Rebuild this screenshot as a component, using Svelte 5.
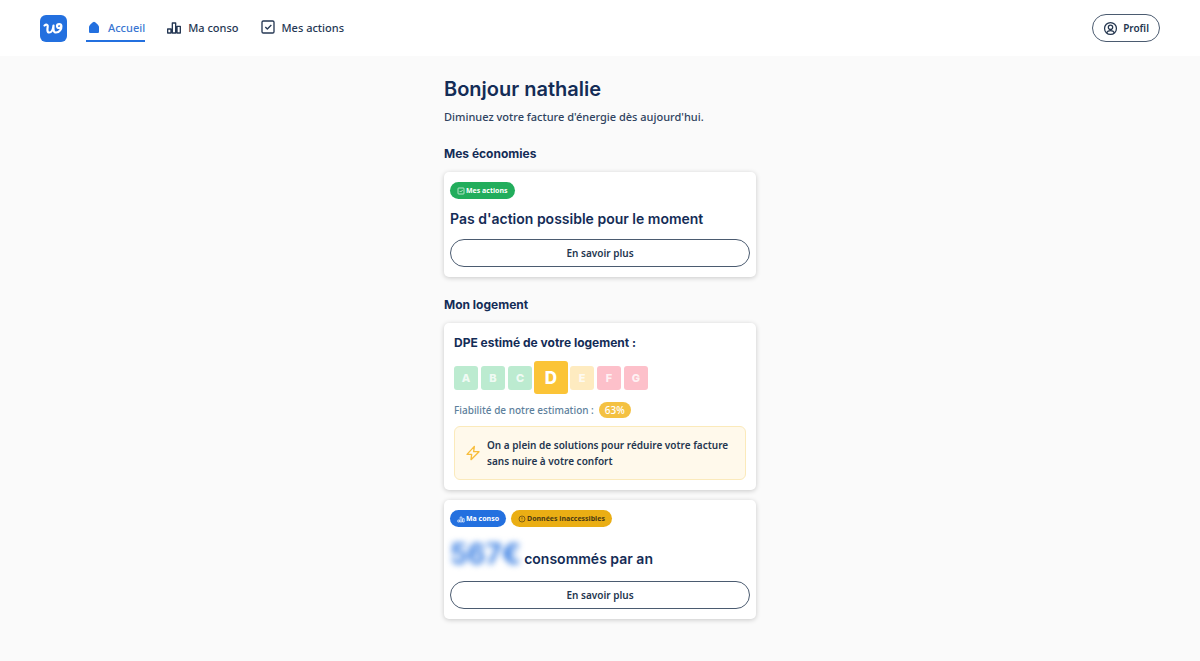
<script>
    const grades = [
        { letter: "A", tone: "green" },
        { letter: "B", tone: "green" },
        { letter: "C", tone: "green" },
        { letter: "D", tone: "yellow" },
        { letter: "E", tone: "yellow" },
        { letter: "F", tone: "red" },
        { letter: "G", tone: "red" },
    ];
    let name = "nathalie";
    let current = "D";
    let reliability = 63;
    let amount = 567;
</script>

{#snippet bars(size)}
    <svg viewBox="0 0 24 24" width={size} height={size} class="line" aria-hidden="true">
        <path d="M2.500 15h5v6h-5zM9.500 6h5v15h-5zM16.500 11h5v10h-5z" />
    </svg>
{/snippet}

{#snippet check(size)}
    <svg viewBox="0 0 24 24" width={size} height={size} class="line" aria-hidden="true">
        <rect x="3" y="3" width="18" height="18" rx="2" />
        <path d="M8 12l3 3 6-6" />
    </svg>
{/snippet}

<header>
    <a class="logo" href="#accueil" aria-label="Accueil">
        <svg viewBox="0 0 27 27" width="27" height="27" aria-hidden="true">
            <path d="M4.500 10.500c1.700-1.400 3.700-1 3.200 1.200-.4 2.500-.7 5.800 1.500 5.800 2.400 0 3.900-3 4.300-7-.3 4-.2 7 2.500 7 3.600 0 5.600-3.500 5.400-6.500-.2-2.600-4.400-2.600-4.400.1 0 2.600 3.800 2.500 4.400 0" />
        </svg>
    </a>
    <nav>
        <a class="active" href="#accueil">
            <svg viewBox="0 0 24 24" width="16" height="16" aria-hidden="true">
                <path fill="currentColor" d="M12 4c-1.500 0-7.500 5-7.500 8v7c0 1.200.8 2 2 2h11c1.200 0 2-.8 2-2v-7c0-3-6-8-7.500-8z" />
            </svg>
            Accueil
        </a>
        <a href="#conso">{@render bars(16)} Ma conso</a>
        <a href="#actions">{@render check(16)} Mes actions</a>
    </nav>
    <button class="profile">
        <svg viewBox="0 0 24 24" width="15" height="15" class="line" aria-hidden="true">
            <circle cx="12" cy="12" r="9.500" />
            <circle cx="12" cy="10" r="3.500" />
            <path d="M5.500 19c1.500-2.500 4-3.500 6.500-3.500s5 1 6.500 3.500" />
        </svg>
        Profil
    </button>
</header>

<main>
    <h1>Bonjour {name}</h1>
    <p class="intro">Diminuez votre facture d'énergie dès aujourd'hui.</p>

    <h2>Mes économies</h2>
    <section class="card">
        <div class="tags">
            <span class="tag green">{@render check(8)}Mes actions</span>
        </div>
        <h3>Pas d'action possible pour le moment</h3>
        <button class="more">En savoir plus</button>
    </section>

    <h2>Mon logement</h2>
    <section class="card dpe">
        <h4>DPE estimé de votre logement :</h4>
        <div class="grades">
            {#each grades as grade (grade.letter)}
                <span class="grade {grade.tone}" class:current={grade.letter === current}>
                    {grade.letter}
                </span>
            {/each}
        </div>
        <p class="reliability">
            Fiabilité de notre estimation :
            <span>{reliability}%</span>
        </p>
        <div class="notice">
            <svg viewBox="0 0 24 24" width="16" height="16" class="line" aria-hidden="true">
                <path d="M14 2L3 14h7l-1 8 12-12h-8z" />
            </svg>
            <p>On a plein de solutions pour réduire votre facture sans nuire à votre confort</p>
        </div>
    </section>

    <section class="card">
        <div class="tags">
            <span class="tag blue">{@render bars(8)}Ma conso</span>
            <span class="tag amber">
                <svg viewBox="0 0 24 24" width="8" height="8" class="line" aria-hidden="true">
                    <circle cx="12" cy="12" r="9" />
                    <path d="M12 7v6M12 16v1" />
                </svg>Données inaccessibles
            </span>
        </div>
        <h3 class="usage"><span class="amount">{amount}€</span> consommés par an</h3>
        <button class="more">En savoir plus</button>
    </section>
</main>

<style>
    :global(body) {
        background: #fafafa;
        color: #24364f;
        font-family: "Noto Sans", sans-serif;
        font-size: 11px;
    }

    header {
        display: flex;
        align-items: center;
        height: 56px;
        padding: 0 40px;
        background: white;
    }

    .logo {
        width: 27px;
        height: 27px;
        border-radius: 6px;
        background: #2370df;
    }
    .logo path {
        fill: none;
        stroke: white;
        stroke-width: 2.2;
        stroke-linecap: round;
        stroke-linejoin: round;
    }

    nav {
        display: flex;
        gap: 21px;
        margin-left: 19px;
    }
    nav a {
        display: flex;
        align-items: center;
        gap: 6px;
        height: 26px;
        border-bottom: 2px solid transparent;
        color: #263854;
        font-weight: 500;
        text-decoration: none;
    }
    nav a.active {
        color: #3a76d2;
        border-color: #2370df;
    }
    nav a.active svg {
        color: #2370df;
    }

    .line {
        flex: none;
        fill: none;
        stroke: currentColor;
        stroke-width: 2;
        stroke-linejoin: round;
    }

    button {
        border: 1px solid #4b5b70;
        border-radius: 14px;
        background: white;
        color: #24364f;
        font-family: inherit;
        font-size: 10px;
        font-weight: 600;
        cursor: pointer;
    }
    .profile {
        display: flex;
        align-items: center;
        gap: 5px;
        height: 28px;
        margin-left: auto;
        padding: 0 10px;
    }

    main {
        max-width: 312px;
        margin: 0 auto;
        padding: 20px 16px 40px;
    }

    h1,
    h2,
    h3,
    h4 {
        margin: 0;
        color: #142c56;
        font-family: Inter, sans-serif;
        font-weight: 700;
    }
    h1 {
        font-size: 20px;
        font-weight: 600;
        line-height: 26px;
    }
    h2 {
        margin: 18px 0 8px;
        font-size: 12px;
        line-height: 20px;
    }
    h3 {
        margin: 10px 0;
        font-size: 14px;
        font-weight: 600;
        line-height: 20px;
    }
    h4 {
        font-size: 12px;
        line-height: 20px;
    }
    p {
        margin: 0;
    }
    .intro {
        margin-top: 6px;
        font-weight: 500;
        line-height: 18px;
        color: #2f4360;
    }

    .card {
        margin-bottom: 10px;
        padding: 10px 6px;
        border-radius: 5px;
        background: white;
        box-shadow: 0 1px 5px rgba(0, 0, 0, 0.2);
    }
    .card.dpe {
        padding: 10px;
    }

    .tags {
        display: flex;
        gap: 5px;
    }
    .tag {
        display: flex;
        align-items: center;
        gap: 1px;
        height: 17px;
        padding: 0 7px;
        border-radius: 9px;
        color: white;
        font-size: 7px;
        font-weight: 700;
    }
    .tag.green {
        background: #22ad5c;
    }
    .tag.blue {
        background: #2370df;
    }
    .tag.amber {
        background: #eaae14;
        color: #4b3a14;
    }

    .more {
        display: block;
        width: 100%;
        height: 28px;
    }

    .grades {
        display: flex;
        align-items: center;
        gap: 3px;
        margin: 8px 0;
    }
    .grade {
        display: grid;
        place-items: center;
        width: 24px;
        height: 24px;
        border-radius: 3px;
        color: rgba(255, 255, 255, 0.8);
        font-family: Inter, sans-serif;
        font-size: 11px;
        font-weight: 800;
    }
    .grade.green {
        background: #bcebd0;
    }
    .grade.yellow {
        background: #feebc0;
    }
    .grade.red {
        background: #fdc0ca;
    }
    .grade.current {
        width: 34px;
        height: 33px;
        margin: 0 -1px;
        background: #fbc437;
        color: white;
        font-size: 17px;
    }

    .reliability {
        display: flex;
        align-items: center;
        gap: 5px;
        color: #5d7f9c;
        font-size: 10px;
        font-weight: 500;
    }
    .reliability span {
        padding: 0 6px;
        border-radius: 8px;
        background: #f4c142;
        color: white;
        line-height: 16px;
    }

    .notice {
        display: flex;
        align-items: center;
        gap: 6px;
        margin-top: 8px;
        padding: 10px;
        border: 1px solid #fbeabb;
        border-radius: 6px;
        background: #fff9eb;
        font-size: 10px;
        font-weight: 600;
        line-height: 16px;
    }
    .notice svg {
        color: #f8bd3a;
    }

    .usage {
        margin-bottom: 5px;
        line-height: 34px;
    }
    .amount {
        color: #2370df;
        font-size: 28px;
        filter: blur(3px);
    }
</style>
